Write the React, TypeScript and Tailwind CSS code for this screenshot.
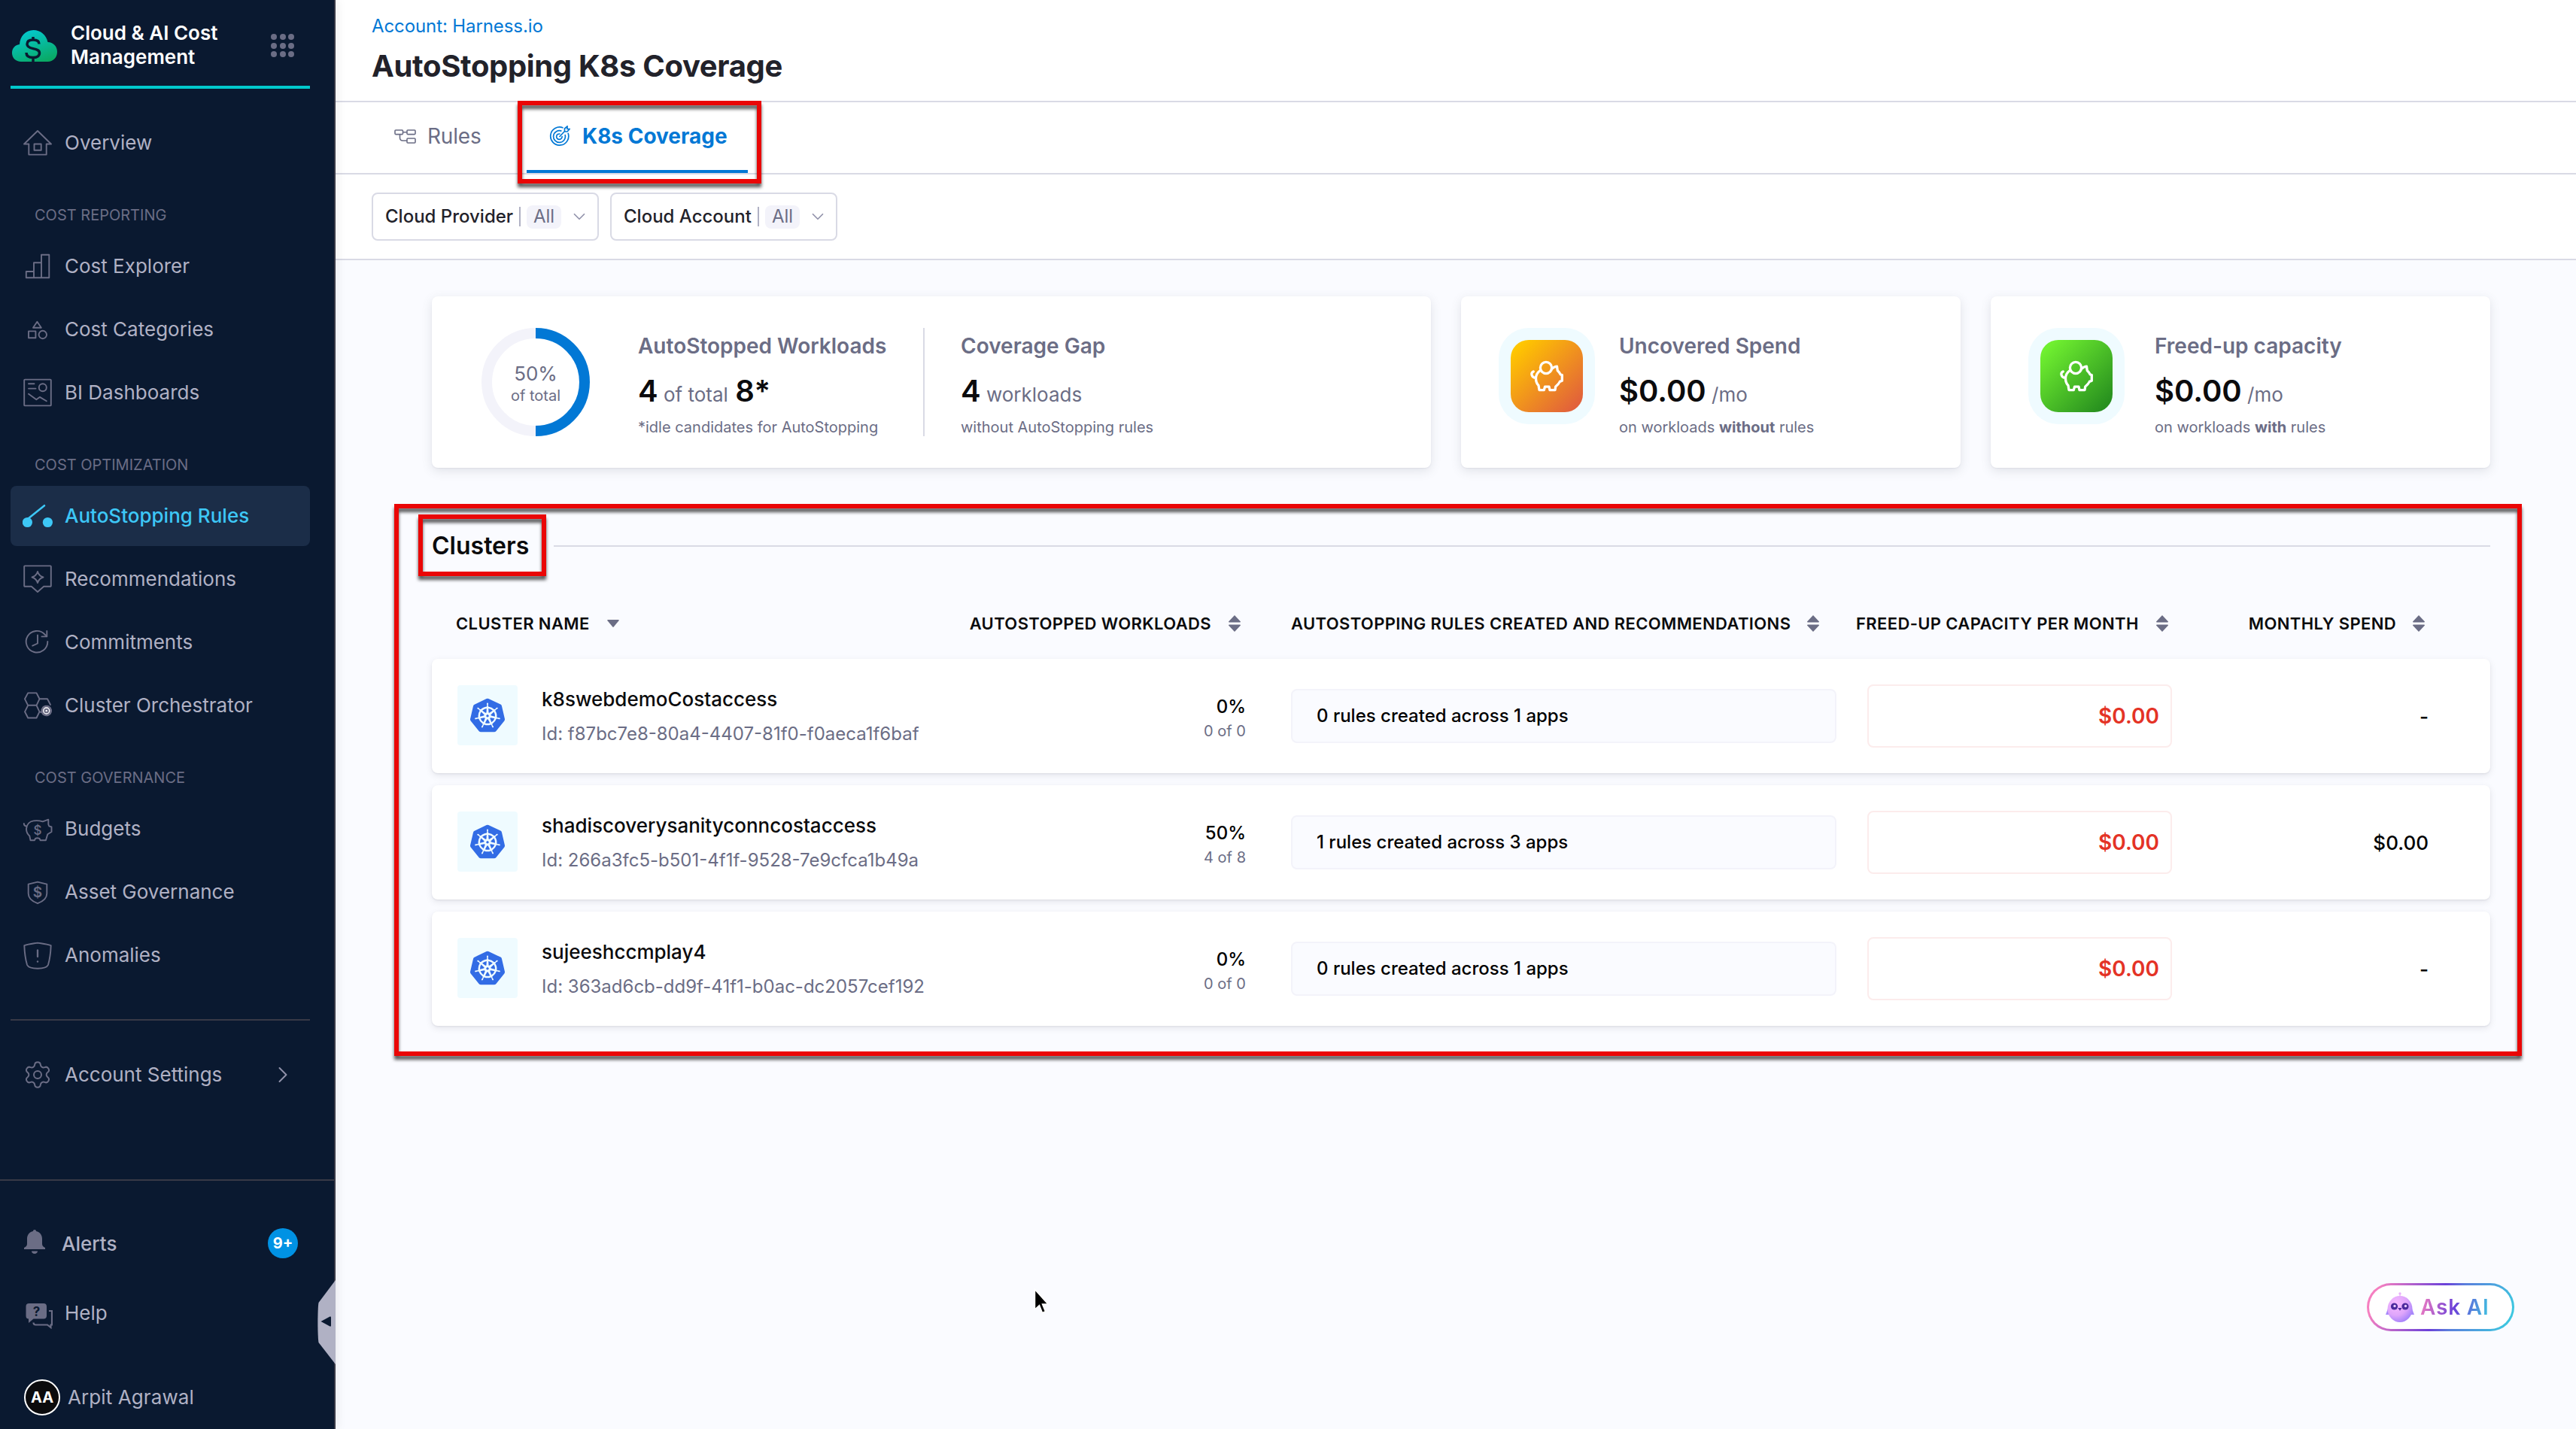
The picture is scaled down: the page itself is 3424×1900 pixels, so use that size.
import type { ReactNode } from 'react';
import { ChevronDown, ChevronRight, Settings } from 'lucide-react';
import { SiKubernetes } from 'react-icons/si';
import clsx from 'clsx';

interface NavItem {
  label: string;
  icon: ReactNode;
  active?: boolean;
}

interface Cluster {
  name: string;
  id: string;
  percent: string;
  ratio: string;
  rules: string;
  freed: string;
  spend: string;
}

const clusters: Cluster[] = [
  {
    name: 'k8swebdemoCostaccess',
    id: 'f87bc7e8-80a4-4407-81f0-f0aeca1f6baf',
    percent: '0%',
    ratio: '0 of 0',
    rules: '0 rules created across 1 apps',
    freed: '$0.00',
    spend: '-',
  },
  {
    name: 'shadiscoverysanityconncostaccess',
    id: '266a3fc5-b501-4f1f-9528-7e9cfca1b49a',
    percent: '50%',
    ratio: '4 of 8',
    rules: '1 rules created across 3 apps',
    freed: '$0.00',
    spend: '$0.00',
  },
  {
    name: 'sujeeshccmplay4',
    id: '363ad6cb-dd9f-41f1-b0ac-dc2057cef192',
    percent: '0%',
    ratio: '0 of 0',
    rules: '0 rules created across 1 apps',
    freed: '$0.00',
    spend: '-',
  },
];

function NavIcon({ children }: { children: ReactNode }) {
  return (
    <svg
      viewBox="0 0 40 40"
      className="size-10 shrink-0"
      fill="none"
      stroke="currentColor"
      strokeWidth="1.9"
      strokeLinejoin="round"
      strokeLinecap="round"
    >
      {children}
    </svg>
  );
}

const dollar = (
  <text x="20" y="28" textAnchor="middle" fontSize="17" fontWeight="500" fill="currentColor" stroke="none">
    $
  </text>
);

const overview: NavItem = {
  label: 'Overview',
  icon: (
    <NavIcon>
      <path d="M20 4 38 21.5H31.7V35.6H8.3V21.5H2Z" />
      <rect x="15.5" y="21.5" width="9.2" height="8.2" />
    </NavIcon>
  ),
};

const sections: { title: string; items: NavItem[] }[] = [
  {
    title: 'COST REPORTING',
    items: [
      {
        label: 'Cost Explorer',
        icon: (
          <NavIcon>
            <path d="M4.8 27h10.2v8.2H4.8ZM15 15.3h10v19.9H15ZM25 4.8h10.3v30.4H25Z" />
          </NavIcon>
        ),
      },
      {
        label: 'Cost Categories',
        icon: (
          <NavIcon>
            <path d="M19.4 9.8 24.8 17.8H14Z" />
            <rect x="8" y="22.4" width="9.4" height="8.8" />
            <circle cx="26.8" cy="27" r="5.2" />
          </NavIcon>
        ),
      },
      {
        label: 'BI Dashboards',
        icon: (
          <NavIcon>
            <rect x="2.2" y="2.6" width="35.6" height="34.8" rx="1" />
            <circle cx="26.8" cy="13.2" r="5" />
            <path d="M8 8.3h7.5M8 14.6h9.5M8 21.8l10.3 7.4 4.5-3.3 9 5.4" />
          </NavIcon>
        ),
      },
    ],
  },
  {
    title: 'COST OPTIMIZATION',
    items: [
      {
        label: 'AutoStopping Rules',
        active: true,
        icon: (
          <NavIcon>
            <circle cx="6.4" cy="28.5" r="6.6" fill="currentColor" stroke="none" />
            <circle cx="33.4" cy="28.5" r="6.6" fill="currentColor" stroke="none" />
            <path d="M5 25.5 29 6.2" strokeWidth="2.6" />
          </NavIcon>
        ),
      },
      {
        label: 'Recommendations',
        icon: (
          <NavIcon>
            <path d="M3 2.4H37a.8.8 0 0 1 .8.8V29a.8.8 0 0 1-.8.8H28.2L20 37 11.8 29.8H3a.8.8 0 0 1-.8-.8V3.2a.8.8 0 0 1 .8-.8Z" />
            <path d="M20 10c1.2 4.2 3.3 6.3 7.5 7.5-4.2 1.2-6.3 3.3-7.5 7.5-1.2-4.2-3.3-6.3-7.5-7.5 4.2-1.2 6.3-3.3 7.5-7.5Z" />
          </NavIcon>
        ),
      },
      {
        label: 'Commitments',
        icon: (
          <NavIcon>
            <path d="M33.3 19A14.3 14.3 0 1 1 29.5 9.500L32 12" />
            <path d="M32.3 5V12.4H25.500M20 10.500V21.500L13.200 24.600" />
          </NavIcon>
        ),
      },
      {
        label: 'Cluster Orchestrator',
        icon: (
          <NavIcon>
            <path d="M7.2 3.4H18.5L22.5 11.3 18.5 19.8H7.2L3 11.3ZM7.2 19.8H18.5L22.5 28.3 18.5 36.5H7.2L3 28.3ZM22.5 11.3H33L37 19M22.5 28.3 25 29" />
            <circle cx="31.7" cy="27" r="6.4" fill="currentColor" strokeDasharray="2 1.4" />
            <circle cx="31.7" cy="27" r="4" stroke="#fff" strokeWidth="1.3" />
            <circle cx="31.7" cy="27" r="1.2" fill="#fff" stroke="none" />
          </NavIcon>
        ),
      },
    ],
  },
  {
    title: 'COST GOVERNANCE',
    items: [
      {
        label: 'Budgets',
        icon: (
          <NavIcon>
            <path d="M1.8 13c0 2 .6 3 3.2 3.7M5 20c.6-6 4.5-10 9.5-10.6 4.5-.7 8-.4 12.3 1L34.3 7.7V14l.8 2.3 3.4 1.2V24l-5.2 3.2-2.4 8H23.5l-1-2.4c-2-.7-4-.7-5.5 0l-1 2.4H10.5L9.3 29.5C6.5 27 5 24 5 20Z" />
            {dollar}
          </NavIcon>
        ),
      },
      {
        label: 'Asset Governance',
        icon: (
          <NavIcon>
            <path d="M20 6.6 32.3 9.6V22c0 7-5 10.5-12.3 13.2C12.7 32.5 7.7 29 7.7 22V9.600Z" />
            <text x="20" y="27" textAnchor="middle" fontSize="19" fontWeight="600" fill="currentColor" stroke="none">
              $
            </text>
          </NavIcon>
        ),
      },
      {
        label: 'Anomalies',
        icon: (
          <NavIcon>
            <path d="M2.3 7.2C8 5 14 4.6 20 3.6c6 1 12 1.4 17.7 3.6-.3 9-1.5 18-3.7 25.6C32 37 27 37.7 20 37.7S8 37 6 32.8C3.8 25.2 2.6 16.2 2.3 7.2Z" />
            <path d="M20 13.500V22" strokeWidth="2.3" />
            <circle cx="20" cy="28.5" r="1.2" fill="currentColor" stroke="none" />
          </NavIcon>
        ),
      },
    ],
  },
];

function NavRow({ item }: { item: NavItem }) {
  return (
    <div
      className={clsx(
        'flex h-20 items-center gap-4 rounded-lg pl-4 text-[26px]',
        item.active ? 'bg-[#1b2d48] font-medium text-[#3dc7f6]' : 'text-[#b0b1c4]'
      )}
    >
      <span className={item.active ? 'text-[#3dc7f6]' : 'text-[#6b6d85]'}>{item.icon}</span>
      <span className="pb-0.5">{item.label}</span>
    </div>
  );
}

function Sidebar() {
  return (
    <aside className="relative z-10 flex h-full w-[446px] shrink-0 flex-col border-r-2 border-[#383946] bg-[#0a1930] shadow-[0_0_14px_rgba(0,0,0,0.1)]">
      <div className="mr-8 ml-3.5 flex h-[118px] items-start border-b-4 border-[#01c9cc]">
        <svg viewBox="0 0 60 42" className="mt-10 ml-0.5 h-[42px] w-[60px]">
          <defs>
            <linearGradient id="cloud" x1="0.3" y1="0" x2="0.8" y2="1">
              <stop offset="0" stopColor="#04c9d0" />
              <stop offset="1" stopColor="#0aa860" />
            </linearGradient>
          </defs>
          <path
            d="M12 42C5 42 0 37 0 30.5S4 20 10 19C10.5 8.5 18 0 28.5 0 38 0 45.5 6.5 47.5 16 54.5 16 60 21.5 60 29S54.5 42 47.5 42Z"
            fill="url(#cloud)"
          />
          <path
            d="M36 18.5C36 14.5 32.5 13 28 13c-4.8 0-8 2-8 5.7 0 3.8 3.5 4.9 8 5.9 4.7 1 8.5 2 8.5 6 0 3.9-3.5 6-8.5 6-5.2 0-9-2-9-6.6M28 9v5M28 36v6"
            fill="none"
            stroke="#0a1930"
            strokeWidth="3.5"
          />
        </svg>
        <div className="mt-[28px] ml-[18px] text-[26px] leading-8 font-semibold whitespace-nowrap text-white">
          Cloud & AI Cost
          <br />
          Management
        </div>
        <div className="mt-[45px] mr-[21px] ml-auto grid grid-cols-3 gap-x-[3.5px] gap-y-[3.5px]">
          {[0, 1, 2, 3, 4, 5, 6, 7, 8].map((n) => (
            <span key={n} className="size-2 rounded-full bg-[#6b6d85]" />
          ))}
        </div>
      </div>

      <nav className="mt-8 mr-8 ml-3.5 flex flex-col">
        <NavRow item={overview} />
        {sections.map((section) => (
          <div key={section.title}>
            <div className="mt-10 mb-3 ml-8 h-8 text-[20px] leading-8 text-[#6b6d85]">{section.title}</div>
            <div className="flex flex-col gap-1">
              {section.items.map((item) => (
                <NavRow key={item.label} item={item} />
              ))}
            </div>
          </div>
        ))}
        <div className="mt-[45px] h-0.5 bg-[#383946]" />
        <div className="mt-8 flex h-20 items-center gap-4 pl-4 text-[26px] text-[#b0b1c4]">
          <Settings className="size-10 text-[#6b6d85]" strokeWidth={1.2} />
          <span className="pb-0.5">Account Settings</span>
          <ChevronRight className="mr-[18px] ml-auto size-9 text-[#9293ab]" strokeWidth={1.3} />
        </div>
      </nav>

      <div className="mt-auto flex h-[332px] flex-col border-t-2 border-[#383946] text-[26px] text-[#b0b1c4]">
        <div className="mt-[59px] flex h-12 items-center pl-8 font-medium">
          <svg viewBox="0 0 28 32" className="-mt-1 mr-[22px] h-8 w-7" fill="#6b6d85">
            <path d="M14 0c1.3 0 2 .8 2 2 5 1 8 5 8 10v7c0 2 1.5 4 4 5v2H0v-2c2.500-1 4-3 4-5v-7C4 7 7 3 12 2c0-1.200.7-2 2-2ZM10 28.500h8c0 2-1.800 3.500-4 3.500s-4-1.500-4-3.500Z" />
          </svg>
          Alerts
          <span className="mr-12 ml-auto flex size-10 items-center justify-center rounded-full bg-[#0092e4] text-[20px] font-bold text-white">
            9+
          </span>
        </div>
        <div className="mt-[44px] flex h-12 items-center pl-[34px]">
          <svg viewBox="0 0 36 34" className="mt-[10px] mr-4 h-[34px] w-9" fill="none">
            <path
              d="M4.5 0H24c2.5 0 4 1.5 4 4v12.500c0 2.500-1.500 4-4 4H10.500L4 26v-5.500C1.500 20.500.5 19 .5 16.500V4c0-2.500 1.500-4 4-4Z"
              fill="#6b6d85"
            />
            <path d="M31 10h4v18.500h-1.500V32l-4.500-3.500H13.500c-2 0-3-1-3-3" stroke="#6b6d85" strokeWidth="2.2" />
            <text x="14.5" y="16.5" textAnchor="middle" fontSize="17" fontWeight="700" fill="#0a1930">
              ?
            </text>
          </svg>
          Help
        </div>
        <div className="mt-[65px] flex h-12 items-center gap-2.5 pl-8">
          <span className="flex size-12 items-center justify-center rounded-full border-2 border-white bg-[#0b0b0d] text-[20px] font-bold text-white">
            AA
          </span>
          <span className="pb-0.5 tracking-[0.1px]">Arpit Agrawal</span>
        </div>
      </div>

      <svg viewBox="0 0 24 112" className="absolute top-[1702px] -right-0.5 h-28 w-6">
        <path d="M24 0V112L1.5 83C0 75 0 38 1.5 30Z" fill="#b0b1c4" />
        <path d="M4.5 55 16.5 48.5Q18 48 18 49.5V60.5Q18 62 16.5 61.5Z" fill="#0a1930" />
      </svg>
    </aside>
  );
}

function Filter({ label }: { label: string }) {
  return (
    <div className="flex h-16 w-[302px] items-center rounded-lg border-2 border-[#d9dae5] bg-white pl-4 text-[24px]">
      <span className="w-[171px] font-medium whitespace-nowrap text-[#22222a]">{label}</span>
      <span className="ml-[7px] h-[26px] w-0.5 bg-[#b0b1c4]" />
      <span className="ml-2 flex h-[31px] w-[46px] items-center justify-center rounded-lg bg-[#f3f3fa] text-[#6b6d85]">
        All
      </span>
      <ChevronDown className="ml-[11px] size-[26px] text-[#9293ab]" strokeWidth={1.6} />
    </div>
  );
}

// Red callout frame laid over the page
function Callout({ className }: { className: string }) {
  return (
    <div
      className={clsx(
        'pointer-events-none absolute z-20 border-[6px] border-[#ea0606] drop-shadow-[0_5px_2px_rgba(0,0,0,0.65)]',
        className
      )}
    />
  );
}

function PiggyTile({ className }: { className: string }) {
  return (
    <div className="flex size-32 shrink-0 items-center justify-center rounded-[40px] bg-[#effbff]">
      <div className={clsx('flex size-24 items-center justify-center rounded-3xl bg-linear-to-br/srgb from-10% to-90%', className)}>
        <svg
          viewBox="0 0 44 42"
          className="h-[42px] w-11"
          fill="none"
          stroke="white"
          strokeWidth="3.3"
          strokeLinejoin="round"
          strokeLinecap="round"
        >
          <circle cx="21" cy="10" r="7.6" />
          <path d="M28.5 11.5c3-2.5 5-3.3 7-3.3l.8 5.6c2 1.7 3 3.3 4 5.2l2 .6v7.6l-3 1.2c-1.2 2.5-3 4.7-5.6 6.6L33 39.6h-7L25 35.2H19.5L18.3 39.6H12L11 33.5C8.5 31 7.5 28 7.5 24.5c0-4.5 2-8.3 5.8-11M4.2 15C2 16 1.5 18 2.2 20c.7 2 2.5 3.3 5 3.3" />
        </svg>
      </div>
    </div>
  );
}

interface StatProps {
  title: string;
  note: ReactNode;
  children: ReactNode;
  className?: string;
}

function Stat({ title, note, children, className }: StatProps) {
  return (
    <div className={clsx('pt-2 whitespace-nowrap text-[#6b6d85]', className)}>
      <div className="text-[28px] leading-8 font-semibold">{title}</div>
      <div className="mt-5 h-12 text-[26px] leading-[48px]">{children}</div>
      <div className="mt-2.5 text-[20px] leading-7">{note}</div>
    </div>
  );
}

function Big({ children }: { children: ReactNode }) {
  return <span className="text-[40px] leading-[48px] font-semibold text-[#0b0b0d]">{children}</span>;
}

function SortIcon() {
  return (
    <svg viewBox="0 0 16 22" className="h-[22px] w-4 shrink-0" fill="#6b6d85">
      <path d="M8 0 16 8.6Q16 9.5 15 9.5H1Q0 9.5 0 8.6ZM8 22 0 13.4Q0 12.5 1 12.5H15Q16 12.5 16 13.4Z" />
    </svg>
  );
}

const columns = 'grid grid-cols-[626px_456px_60px_751px_420px_341px]';

function ClusterTable() {
  return (
    <div>
      <div
        className={clsx(columns, 'h-7 items-center text-[22px] leading-7 font-semibold tracking-[0.37px] whitespace-nowrap text-[#0b0b0d]')}
      >
        <div className="flex items-center gap-[23px] pl-8">
          CLUSTER NAME
          <svg viewBox="0 0 16 10" className="h-2.5 w-4" fill="#6b6d85">
            <path d="M1 0H15Q16.3 0 15.5 1.2L8.7 9.5Q8 10.3 7.3 9.5L.5 1.2Q-.3 0 1 0Z" />
          </svg>
        </div>
        <div className="flex items-center justify-end gap-[23px] pr-[7px]">
          AUTOSTOPPED WORKLOADS <SortIcon />
        </div>
        <div className="col-start-4 flex items-center gap-[22px]">
          AUTOSTOPPING RULES CREATED AND RECOMMENDATIONS <SortIcon />
        </div>
        <div className="flex items-center gap-[23px]">
          FREED-UP CAPACITY PER MONTH <SortIcon />
        </div>
        <div className="flex items-center justify-end gap-[22px] pr-[5px]">
          MONTHLY SPEND <SortIcon />
        </div>
      </div>

      <div className="mt-[33px] flex flex-col gap-4">
        {clusters.map((c) => (
          <div
            key={c.id}
            className={clsx(columns, 'h-[152px] items-center rounded-lg bg-white shadow-[0_1px_2px_rgba(40,41,61,0.08),0_3px_9px_rgba(96,97,112,0.14)]')}
          >
            <div className="flex items-center pl-[34px]">
              <div className="mb-[3px] flex size-20 shrink-0 items-center justify-center rounded bg-[#effbff]">
                <SiKubernetes className="size-[46px] text-[#326ce5]" />
              </div>
              <div className="mt-px ml-8 leading-[46px] whitespace-nowrap">
                <div className="text-[26px] font-medium text-[#0b0b0d]">{c.name}</div>
                <div className="text-[24px] text-[#6b6d85]">Id: {c.id}</div>
              </div>
            </div>
            <div className="pt-1.5 text-right">
              <div className="text-[24px] leading-[33px] font-medium text-black">{c.percent}</div>
              <div className="text-[20px] leading-8 text-[#6b6d85]">{c.ratio}</div>
            </div>
            <div className="col-start-4 mr-[26px] flex h-[72px] items-center rounded-lg border-2 border-[#f3f3fa] bg-[#fafbff] pl-8 text-[24px] font-medium text-black">
              {c.rules}
            </div>
            <div className="ml-[15px] flex h-[84px] items-center justify-end rounded-lg border-2 border-[#fcecec] pr-[15px] text-[28px] font-semibold text-[#e43326]">
              {c.freed}
            </div>
            <div className="text-right text-[26px] font-medium text-black">{c.spend}</div>
          </div>
        ))}
      </div>
    </div>
  );
}

function AskAi() {
  return (
    <button className="absolute top-[1706px] left-[3146px] z-10 h-16 w-[196px] rounded-full bg-[linear-gradient(110deg,#f57fc0_8%,#6b41d9_48%,#5a7fdc_60%,#3dc7e0_95%)] p-[3px]">
      <span className="flex size-full items-center rounded-full bg-white pl-[22px]">
        <svg viewBox="0 0 38 40" className="h-10 w-[38px]">
          <defs>
            <radialGradient id="bird" cx="0.35" cy="0.3" r="0.8">
              <stop offset="0" stopColor="#f8baff" />
              <stop offset="0.55" stopColor="#dfa6fb" />
              <stop offset="1" stopColor="#9a7bfa" />
            </radialGradient>
          </defs>
          <circle cx="19" cy="2" r="1.7" fill="#e9b3fb" />
          <path d="M19 2V6" stroke="#e9b3fb" strokeWidth="1.2" />
          <path d="M3 22 0 30H5ZM35 22 38 30H33Z" fill="#a888fa" />
          <ellipse cx="19" cy="22.5" rx="16.5" ry="17.5" fill="url(#bird)" />
          <circle cx="11.5" cy="19" r="4.6" fill="#4b2a9c" />
          <circle cx="26" cy="19" r="4.6" fill="#4b2a9c" />
          <circle cx="12" cy="18.5" r="1.7" fill="#e9ccff" />
          <circle cx="26.5" cy="18.5" r="1.7" fill="#e9ccff" />
          <path d="M16.3 21H21.5L19 24.8Z" fill="#4b2a9c" />
        </svg>
        <span className="ml-2 bg-[linear-gradient(100deg,#f57fc0_0%,#6b41d9_50%,#3dc7e0_100%)] bg-clip-text text-[28px] font-semibold tracking-[0.8px] text-transparent">
          Ask AI
        </span>
      </span>
    </button>
  );
}

export default function App() {
  return (
    <div className="relative flex h-[1900px] w-[3424px] overflow-hidden bg-[#fafbff] font-['Inter',sans-serif]">
      <Sidebar />

      <main className="flex-1">
        <header className="h-[136px] border-b-2 border-[#d9dae5] bg-white pt-[19px] pl-12">
          <div className="text-[24px] leading-8 tracking-[-0.1px] text-[#0278d5]">Account: Harness.io</div>
          <h1 className="mt-[13px] text-[40px] leading-[48px] font-bold tracking-[-0.35px] text-[#22222a]">
            AutoStopping K8s Coverage
          </h1>
        </header>

        <div className="flex h-24 gap-8 border-b-2 border-[#d9dae5] bg-white pl-12 text-[28px]">
          <div className="flex w-[174px] items-center gap-[15px] pb-1 pl-[30px] text-[#6b6d85]">
            <svg viewBox="0 0 29 19" className="h-[19px] w-[29px] shrink-0" fill="none" stroke="currentColor" strokeWidth="1.6">
              <rect x="1" y="1" width="10.5" height="5.6" rx="1" />
              <rect x="17" y="1" width="11" height="5.6" rx="1" />
              <rect x="17" y="12" width="11" height="6" rx="1" />
              <path d="M11.5 3.8H17M7.5 6.6V11C7.5 14 9 15 11.5 15H17" />
            </svg>
            <span className="tracking-[-0.2px]">Rules</span>
          </div>
          <div className="flex w-[294px] items-center gap-4 border-b-4 border-[#0278d5] pl-[30px] font-bold text-[#0278d5]">
            <svg viewBox="0 0 28 28" className="size-7 shrink-0" fill="none" stroke="currentColor" strokeWidth="1.7">
              <path d="M18.5 3A12 12 0 1 0 25 9.8M16.5 7.2A7.9 7.9 0 1 0 21 12M14.5 11.2A3.7 3.7 0 1 0 17 14M13.5 15 20.5 7.5V4L24 1V4.5H27L24 8H20.5" />
            </svg>
            K8s Coverage
          </div>
        </div>

        <div className="flex h-[114px] items-start gap-[15px] border-b-2 border-[#d9dae5] bg-white pt-6 pl-12">
          <Filter label="Cloud Provider" />
          <Filter label="Cloud Account" />
        </div>

        <div className="pt-12 pr-[114px] pl-32">
          <div className="grid grid-cols-[1328px_664px_664px] gap-10">
            <div className="flex h-[228px] rounded-lg bg-white pt-[42px] pl-[66px] shadow-[0_1px_2px_rgba(40,41,61,0.06),0_4px_14px_rgba(96,97,112,0.16)]">
              <div className="relative size-36">
                <svg viewBox="0 0 144 144" className="size-36" fill="none" strokeWidth="14">
                  <path d="M72 137A65 65 0 0 1 72 7" stroke="#f3f3fa" />
                  <path d="M72 7A65 65 0 0 1 72 137" stroke="#0278d5" />
                </svg>
                <div className="absolute inset-0 flex flex-col items-center pt-[45px] text-[#6b6d85]">
                  <span className="text-[26px] leading-8">50%</span>
                  <span className="text-[20px] leading-[26px]">of total</span>
                </div>
              </div>
              <Stat
                title="AutoStopped Workloads"
                note="*idle candidates for AutoStopping"
                className="ml-16 h-36 w-[381px] border-r-2 border-[#d9dae5]"
              >
                <Big>4</Big> of total <Big><span className="ml-0.5">8*</span></Big>
              </Stat>
              <Stat title="Coverage Gap" note="without AutoStopping rules" className="ml-12">
                <Big>4</Big> workloads
              </Stat>
            </div>

            <div className="flex h-[228px] rounded-lg bg-white pt-[42px] pl-[50px] shadow-[0_1px_2px_rgba(40,41,61,0.06),0_4px_14px_rgba(96,97,112,0.16)]">
              <PiggyTile className="from-[#ffc600] to-[#e2623a]" />
              <Stat
                title="Uncovered Spend"
                note={<>on workloads <b>without</b> rules</>}
                className="ml-8"
              >
                <Big>$0.00</Big> /mo
              </Stat>
            </div>

            <div className="flex h-[228px] rounded-lg bg-white pt-[42px] pl-[50px] shadow-[0_1px_2px_rgba(40,41,61,0.06),0_4px_14px_rgba(96,97,112,0.16)]">
              <PiggyTile className="from-[#70f030] to-[#28901f]" />
              <Stat title="Freed-up capacity" note={<>on workloads <b>with</b> rules</>} className="ml-10">
                <Big>$0.00</Big> /mo
              </Stat>
            </div>
          </div>

          <div className="mt-[84px] mb-[69px] flex h-10 items-center gap-[33px]">
            <h2 className="text-[32px] leading-10 font-semibold text-[#0b0b0d]">Clusters</h2>
            <div className="h-0.5 flex-1 bg-[#d9dae5]" />
          </div>

          <ClusterTable />
        </div>
      </main>

      <AskAi />

      <Callout className="top-[134px] left-[688px] h-[110px] w-[324px]" />
      <Callout className="top-[670px] left-[524px] h-[734px] w-[2828px]" />
      <Callout className="top-[684px] left-[556px] h-[82px] w-[170px]" />

      <svg viewBox="0 0 20 34" className="absolute top-[1713px] left-[1374px] z-20 h-[34px] w-5">
        <path
          d="M1.5 1.5V28L7.5 22.5 11.5 32.5 15.5 30.8 11.5 21H19Z"
          fill="black"
          stroke="white"
          strokeWidth="1.5"
        />
      </svg>
    </div>
  );
}
